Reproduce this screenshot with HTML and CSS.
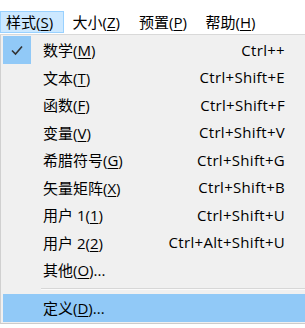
FILE: index.html
```html
<!DOCTYPE html>
<html lang="zh-CN">
<head>
    <meta charset="UTF-8">
    <title>样式菜单</title>
    <link rel="stylesheet" href="styles.css">
</head>
<body>

    <div class="menubar">
        <span class="bar-item active">样式(<u>S</u>)</span>
        <span class="bar-item">大小(<u>Z</u>)</span>
        <span class="bar-item">预置(<u>P</u>)</span>
        <span class="bar-item">帮助(<u>H</u>)</span>
    </div>

    <div class="menu">
        <div class="row">
            <span class="check">
                <svg width="14" height="14" viewBox="0 0 14 14"><path d="M2 7.5 L5.5 11 L12 3.5" fill="none" stroke="#333" stroke-width="1.6"/></svg>
            </span>
            <span class="label">数学(<u>M</u>)</span>
            <span class="key">Ctrl++</span>
        </div>
        <div class="row"><span class="check"></span><span class="label">文本(<u>T</u>)</span><span class="key">Ctrl+Shift+E</span></div>
        <div class="row"><span class="check"></span><span class="label">函数(<u>F</u>)</span><span class="key">Ctrl+Shift+F</span></div>
        <div class="row"><span class="check"></span><span class="label">变量(<u>V</u>)</span><span class="key">Ctrl+Shift+V</span></div>
        <div class="row"><span class="check"></span><span class="label">希腊符号(<u>G</u>)</span><span class="key">Ctrl+Shift+G</span></div>
        <div class="row"><span class="check"></span><span class="label">矢量矩阵(<u>X</u>)</span><span class="key">Ctrl+Shift+B</span></div>
        <div class="row"><span class="check"></span><span class="label">用户 1(<u>1</u>)</span><span class="key">Ctrl+Shift+U</span></div>
        <div class="row"><span class="check"></span><span class="label">用户 2(<u>2</u>)</span><span class="key">Ctrl+Alt+Shift+U</span></div>
        <div class="row"><span class="check"></span><span class="label">其他(<u>O</u>)...</span><span class="key"></span></div>
        <div class="separator"></div>
        <div class="row hover"><span class="check"></span><span class="label">定义(<u>D</u>)...</span><span class="key"></span></div>
    </div>

</body>
</html>
```

FILE: styles.css
```css
body {
    margin: 0;
    background: #ffffff;
    font-family: "Open Sans", "Noto Sans CJK SC", sans-serif;
    font-size: 15px;
    color: #000;
    overflow: hidden;
}
u {
    text-decoration-thickness: 1px;
    text-underline-offset: 2px;
}
.menubar {
    display: flex;
    padding-top: 11px;
    height: 23px;
    border-bottom: 1px solid #d9d9d9;
}
.bar-item {
    width: 66.5px;
    height: 22px;
    line-height: 22px;
    padding-left: 6px;
    box-sizing: border-box;
}
.bar-item.active {
    width: 64px;
    margin-right: 2.5px;
    background: #cce8ff;
    border: 1px solid #99d1ff;
    line-height: 20px;
    padding-left: 5px;
}
.menu {
    width: 100%;
    background: #f0f0f0;
    border-left: 1px solid #d0d0d0;
    border-bottom: 1px solid #cccccc;
    padding: 1px 0 1px 2px;
    box-shadow: 0 3px 2px -1px #a8a8a8;
    box-sizing: border-box;
    height: 289px;
}
.row {
    display: flex;
    align-items: center;
    height: 27.5px;
    width: 298px;
}
.check {
    width: 28px;
    height: 28px;
    display: flex;
    align-items: center;
    justify-content: center;
    margin-right: 12px;
}
.row:first-child .check {
    background: #91c9f7;
}
.label {
    flex: 1;
    white-space: nowrap;
}
.key {
    padding-right: 16px;
    white-space: nowrap;
    letter-spacing: 0.3px;
}
.separator {
    height: 1px;
    background: #d7d7d7;
    margin: 4px 0 4px 38px;
    border-bottom: 1px solid #fafafa;
}
.row.hover {
    background: #91c9f7;
    height: 28px;
    width: 100%;
}
```
